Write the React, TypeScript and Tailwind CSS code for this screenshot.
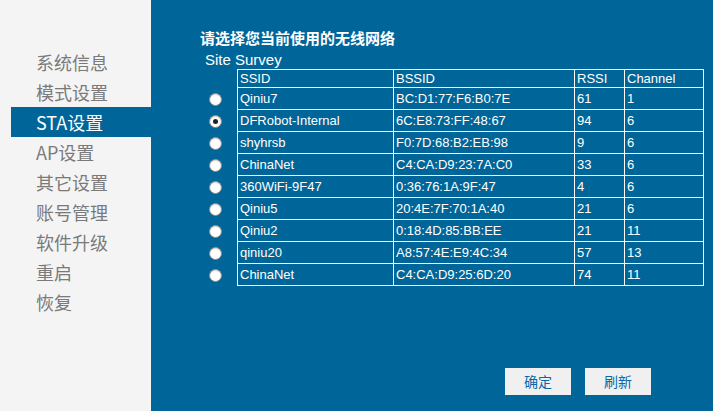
import React from "react";

const menu = ["系统信息", "模式设置", "STA设置", "AP设置", "其它设置", "账号管理", "软件升级", "重启", "恢复"];

const rows: [string, string, string, string][] = [
  ["Qiniu7", "BC:D1:77:F6:B0:7E", "61", "1"],
  ["DFRobot-Internal", "6C:E8:73:FF:48:67", "94", "6"],
  ["shyhrsb", "F0:7D:68:B2:EB:98", "9", "6"],
  ["ChinaNet", "C4:CA:D9:23:7A:C0", "33", "6"],
  ["360WiFi-9F47", "0:36:76:1A:9F:47", "4", "6"],
  ["Qiniu5", "20:4E:7F:70:1A:40", "21", "6"],
  ["Qiniu2", "0:18:4D:85:BB:EE", "21", "11"],
  ["qiniu20", "A8:57:4E:E9:4C:34", "57", "13"],
  ["ChinaNet", "C4:CA:D9:25:6D:20", "74", "11"],
];

const cjk = { fontFamily: '"Noto Sans CJK SC", "Microsoft YaHei", sans-serif' };
const arial = { fontFamily: '"Liberation Sans", Arial, "Noto Sans CJK SC", sans-serif' };

function Radio({ checked }: { checked?: boolean }) {
  return (
    <div className="h-[22px] flex items-center pl-[9px]">
      <div className="w-[13px] h-[13px] rounded-full bg-white border border-[#8a8a8a] flex items-center justify-center shadow-[inset_0_1px_1px_rgba(0,0,0,0.15)]">
        {checked && <div className="w-[5px] h-[5px] rounded-full bg-[#222]" />}
      </div>
    </div>
  );
}

function Cell({ w, children, h }: { w: string; children: React.ReactNode; h: string }) {
  return (
    <div className={`${w} ${h} border-r border-b border-white pl-[2px] flex items-center whitespace-nowrap overflow-hidden`}>
      {children}
    </div>
  );
}

export default function App() {
  return (
    <div className="w-[713px] h-[411px] flex overflow-hidden">
      <div className="w-[151px] h-full bg-[#f4f4f4] pt-[47px] flex flex-col" style={cjk}>
        {menu.map((m) => (
          <div
            key={m}
            className={`ml-[11px] pl-[25px] h-[30px] leading-[30px] text-[18px] ${
              m === "STA设置" ? "bg-[#006699] text-white" : "text-[#7a7a7a]"
            }`}
          >
            {m}
          </div>
        ))}
      </div>
      <div className="flex-1 h-full bg-[#006699] pl-[49px] pt-[28px] text-white">
        <div className="h-[20px] leading-[20px] text-[15px] font-bold" style={cjk}>
          请选择您当前使用的无线网络
        </div>
        <div className="mt-[2px] h-[19px] leading-[19px] text-[15px] pl-[5px]" style={arial}>
          Site Survey
        </div>
        <div className="flex" style={arial}>
          <div className="w-[37px] pt-[19px] flex flex-col">
            {rows.map((r, i) => (
              <Radio key={i} checked={i === 1} />
            ))}
          </div>
          <div className="border-l border-t border-white text-[13px]">
            <div className="flex">
              <Cell w="w-[156px]" h="h-[18px]">SSID</Cell>
              <Cell w="w-[181px]" h="h-[18px]">BSSID</Cell>
              <Cell w="w-[50px]" h="h-[18px]">RSSI</Cell>
              <Cell w="w-[79px]" h="h-[18px]">Channel</Cell>
            </div>
            {rows.map((r, i) => (
              <div className="flex" key={i}>
                <Cell w="w-[156px]" h="h-[22px]">{r[0]}</Cell>
                <Cell w="w-[181px]" h="h-[22px]">{r[1]}</Cell>
                <Cell w="w-[50px]" h="h-[22px]">{r[2]}</Cell>
                <Cell w="w-[79px]" h="h-[22px]">{r[3]}</Cell>
              </div>
            ))}
          </div>
        </div>
        <div className="mt-[82px] ml-[305px] flex gap-[14px]" style={cjk}>
          <button className="w-[66px] h-[27px] bg-[#f0f0f0] text-[#0b67a8] text-[14px] flex items-center justify-center">
            确定
          </button>
          <button className="w-[66px] h-[27px] bg-[#f0f0f0] text-[#0b67a8] text-[14px] flex items-center justify-center">
            刷新
          </button>
        </div>
      </div>
    </div>
  );
}
